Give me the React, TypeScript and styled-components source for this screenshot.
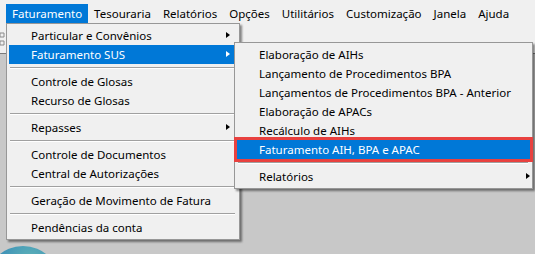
import styled, { createGlobalStyle } from "styled-components";

const GlobalStyle = createGlobalStyle`
	html, body {
		margin: 0;
		padding: 0;
	}
	body {
		font-family: "Noto Sans", "Open Sans", sans-serif;
		font-size: 11.5px;
		color: #000;
	}
`;

const Screen = styled.div`
	position: relative;
	display: flex;
	flex-direction: column;
	width: 535px;
	height: 254px;
	overflow: hidden;
	background: #c8c8c8;
`;

const MenuBar = styled.div`
	display: flex;
	align-items: stretch;
	height: 19px;
	padding: 4px 0 0 6px;
	background: #f0f0f0;
`;

const BarItem = styled.div<{ $active?: boolean }>`
	display: flex;
	align-items: center;
	padding: 0 6px;
	background: ${(p) => (p.$active ? "#0078d7" : "transparent")};
	color: ${(p) => (p.$active ? "#fff" : "#000")};
	white-space: nowrap;
`;

const Toolbar = styled.div`
	display: flex;
	align-items: center;
	height: 30px;
	background: #f0f0f0;
	border-bottom: 1px solid #7a7a7a;
`;

const ToolIcon = styled.svg`
	margin-left: -11px;
	margin-top: 2px;
`;

const Workspace = styled.div`
	flex: 1;
	display: flex;
	align-items: flex-end;
`;

const Logo = styled.div`
	width: 74px;
	height: 74px;
	margin: 0 0 -66px -14px;
	border-radius: 50%;
	background: radial-gradient(circle at 60% 20%, #5fb3b8 0%, #3b8fb8 45%, #2a6fb0 100%);
`;

const Menu = styled.div<{ $left: number; $top: number; $width: number }>`
	position: absolute;
	left: ${(p) => p.$left}px;
	top: ${(p) => p.$top}px;
	width: ${(p) => p.$width}px;
	box-sizing: border-box;
	padding: 2px;
	background: #f0f0f0;
	border: 1px solid #979797;
	box-shadow: 2px 2px 2px rgba(0, 0, 0, 0.45);
`;

const Item = styled.div<{ $active?: boolean; $marked?: boolean }>`
	position: relative;
	display: flex;
	align-items: center;
	height: 19px;
	padding-left: 22px;
	background: ${(p) => (p.$active ? "#0078d7" : "transparent")};
	color: ${(p) => (p.$active ? "#fff" : "#000")};
	white-space: nowrap;
	outline: ${(p) => (p.$marked ? "3px solid #e8413f" : "none")};
`;

const Arrow = styled.span<{ $light?: boolean; $right: number }>`
	position: absolute;
	right: ${(p) => p.$right}px;
	top: 6px;
	width: 0;
	height: 0;
	border-top: 3.5px solid transparent;
	border-bottom: 3.5px solid transparent;
	border-left: 4px solid ${(p) => (p.$light ? "#fff" : "#000")};
`;

const Separator = styled.div`
	height: 8px;
	display: flex;
	align-items: center;
	margin: 0 2px 0 1px;
	&::before {
		content: "";
		flex: 1;
		border-top: 1px solid #a0a0a0;
		border-bottom: 1px solid #fff;
	}
`;

type Entry = { label?: string; sub?: boolean; active?: boolean; marked?: boolean };

const barItems = [
	"Faturamento",
	"Tesouraria",
	"Relatórios",
	"Opções",
	"Utilitários",
	"Customização",
	"Janela",
	"Ajuda",
];

const mainMenu: Entry[] = [
	{ label: "Particular e Convênios", sub: true },
	{ label: "Faturamento SUS", sub: true, active: true },
	{},
	{ label: "Controle de Glosas" },
	{ label: "Recurso de Glosas" },
	{},
	{ label: "Repasses", sub: true },
	{},
	{ label: "Controle de Documentos" },
	{ label: "Central de Autorizações" },
	{},
	{ label: "Geração de Movimento de Fatura" },
	{},
	{ label: "Pendências da conta" },
];

const susMenu: Entry[] = [
	{ label: "Elaboração de AIHs" },
	{ label: "Lançamento de Procedimentos BPA" },
	{ label: "Lançamentos de Procedimentos BPA - Anterior" },
	{ label: "Elaboração de APACs" },
	{ label: "Recálculo de AIHs" },
	{ label: "Faturamento AIH, BPA e APAC", active: true, marked: true },
	{},
	{ label: "Relatórios", sub: true },
];

function MenuEntries({ entries, arrowRight }: { entries: Entry[]; arrowRight: number }) {
	return (
		<>
			{entries.map((e, i) =>
				e.label ? (
					<Item key={i} $active={e.active} $marked={e.marked}>
						{e.label}
						{e.sub && <Arrow $light={e.active} $right={arrowRight} />}
					</Item>
				) : (
					<Separator key={i} />
				)
			)}
		</>
	);
}

function App() {
	return (
		<Screen>
			<GlobalStyle />
			<MenuBar>
				{barItems.map((b, i) => (
					<BarItem key={b} $active={i === 0}>
						{b}
					</BarItem>
				))}
			</MenuBar>
			<Toolbar>
				<ToolIcon width="16" height="16" viewBox="0 0 16 16">
					<path
						d="M2 2h6v4H2zM8 4h3M11 2h4v4h-4zM5 6v4M2 10h6v4H2zM8 12h3M11 10h4v4h-4z"
						fill="none"
						stroke="#8a8a8a"
						strokeWidth="1"
					/>
				</ToolIcon>
			</Toolbar>
			<Workspace>
				<Logo />
			</Workspace>
			<Menu $left={6} $top={23} $width={234}>
				<MenuEntries entries={mainMenu} arrowRight={7} />
			</Menu>
			<Menu $left={234} $top={42} $width={299}>
				<MenuEntries entries={susMenu} arrowRight={0} />
			</Menu>
		</Screen>
	);
}

export default App;
